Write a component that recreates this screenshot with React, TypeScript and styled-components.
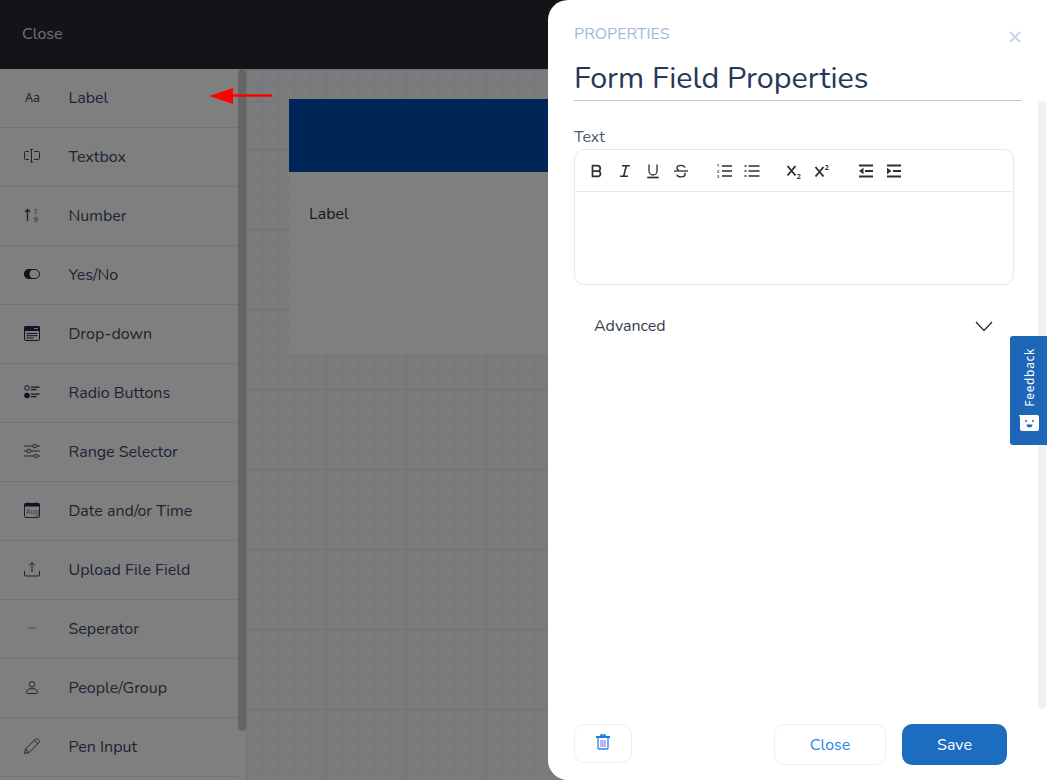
import React from "react";
import styled, { createGlobalStyle } from "styled-components";

const FONT = `"Nunito", "Lato", "Noto Sans", sans-serif`;

const Global = createGlobalStyle`
  html, body { margin: 0; padding: 0; height: 100%; overflow: hidden; background: #fff; }
  * { box-sizing: border-box; }
  body { font-family: ${FONT}; }
`;

const Page = styled.div`
  position: relative; width: 1047px; height: 780px; overflow: hidden;
  display: grid; grid-template-columns: 246px 1fr; grid-template-rows: 69px 1fr;
`;
const TopBar = styled.header`
  grid-column: 1 / 3; background: #26292f; display: flex; align-items: center;
  padding: 0 0 1px 22px; font-size: 16px;
`;
const TopClose = styled.span` color: #fff; opacity: .85; `;
const Sidebar = styled.aside`
  background: #fff; position: relative; overflow: hidden;
`;
const Scroll = styled.div`
  position: absolute; right: 0; top: 0; width: 8px; height: 662px; background: #cbcbcb; border-radius: 4px;
`;
const Row = styled.div`
  height: 59px; display: flex; align-items: center; padding-left: 24px; gap: 28.5px;
  border-bottom: 1px solid #e4e6ee; margin-right: 8px; color: #3a4a68; font-size: 16px;
`;
const IconBox = styled.span`
  width: 16px; height: 16px; display: flex; align-items: center; justify-content: center; flex: none;
  position: relative; top: -1px;
  svg { display: block; overflow: visible; }
`;
const Canvas = styled.main`
  background-color: #f5f7fb;
  background-image:
    linear-gradient(#e0e2ea 1px, transparent 1px),
    linear-gradient(90deg, #e0e2ea 1px, transparent 1px),
    linear-gradient(#e8eaf2 1px, transparent 1px),
    linear-gradient(90deg, #e8eaf2 1px, transparent 1px);
  background-size: 80px 80px, 80px 80px, 16px 16px, 16px 16px;
  padding: 30px 0 0 43px;
`;
const Card = styled.section` background: #fff; width: 400px; height: 255px; `;
const CardHead = styled.div` height: 73px; background: #004cb0; `;
const CardLabel = styled.div` padding: 32px 20px; font-size: 16px; line-height: 20px; color: #2d3340; `;
const Dim = styled.div` position: absolute; inset: 0; background: rgba(0,0,0,.5); `;
const Arrow = styled.svg` position: absolute; left: 208px; top: 85px; `;
const Drawer = styled.aside`
  position: absolute; left: 548px; top: 0; width: 499px; height: 780px; background: #fff;
  border-radius: 20px 0 0 20px; padding: 25px 25px 15px 26px; display: flex; flex-direction: column;
`;
const Eyebrow = styled.div` font-size: 16px; color: #a5b9d6; line-height: 19px; `;
const Title = styled.h1`
  margin: 15px 0 0; font-weight: 400; font-size: 30.5px; line-height: 38px; color: #253858;
  border-bottom: 1px solid #c3c6cf; height: 42px; white-space: nowrap;
`;
const CloseX = styled.svg` position: absolute; left: 461px; top: 31px; `;
const DrawerScroll = styled.div`
  position: absolute; right: 1px; top: 101px; width: 8px; height: 608px; background: #f1f1f1; border-radius: 4px;
`;
const FieldLabel = styled.div` margin-top: 26px; font-size: 16px; line-height: 20px; color: #4a5a73; `;
const Editor = styled.div`
  margin-top: 2px; width: 440px; height: 136px; border: 1px solid #e7e8ec; border-radius: 10px;
`;
const Toolbar = styled.div`
  height: 42px; border-bottom: 1px solid #e7e8ec; display: flex; align-items: center; padding-left: 14px; color: #2b2f36;
`;
const ToolGroup = styled.div<{ $after?: number }>`
  display: flex; gap: 12px; margin-right: ${(p) => p.$after ?? 0}px;
  svg { display: block; overflow: visible; }
`;
const Advanced = styled.div`
  width: 419px; margin-top: 20px; padding-left: 20px; display: flex; justify-content: space-between; align-items: center;
  font-size: 16px; color: #343c49; height: 42px;
`;
const Spacer = styled.div` flex: 1; `;
const Footer = styled.div` display: flex; align-items: flex-start; height: 41px; width: 433px; `;
const TrashBtn = styled.button`
  width: 58px; height: 39px; background: #fff; border: 1px solid #eceef2; border-radius: 10px;
  display: flex; align-items: center; justify-content: center; padding: 0 0 4px;
`;
const GhostBtn = styled.button`
  margin-left: auto; width: 112px; height: 41px; background: #fff; border: 1px solid #eceef2; border-radius: 10px;
  color: #2f86e8; font: 400 16px ${FONT};
`;
const SaveBtn = styled.button`
  margin-left: 16px; width: 105px; height: 41px; background: #1c6cc0; border: 0; border-radius: 10px;
  color: #fff; font: 400 16px ${FONT};
`;
const FeedbackTab = styled.div`
  position: absolute; left: 1010px; top: 336px; width: 37px; height: 109px; background: #1e67b8;
  border-radius: 3px 0 0 3px; display: flex; flex-direction: column; align-items: center; padding: 12px 0 0; gap: 8px; color: #fff;
`;
const FeedbackText = styled.span`
  writing-mode: vertical-rl; transform: rotate(180deg); font: 400 12px "Noto Sans", sans-serif; letter-spacing: .65px; line-height: 16px; margin-left: 3px;
`;

const T = ({ children }: { children: React.ReactNode }) => (
  <svg width="16" height="16" viewBox="0 0 16 16" fill="none" stroke="currentColor">{children}</svg>
);
const Bold = () => <T><path strokeWidth="1.700" d="M3.500 2.500v11M2.800 2.700h5.700a2.700 2.700 0 0 1 0 5.400H3.500M8.500 8.100h.8a2.700 2.700 0 0 1 0 5.300H2.800" /></T>;
const Italic = () => <T><path strokeWidth="1.600" d="M5 2.700h8M3 13.300h8M9.400 2.700 6.600 13.300" /></T>;
const Under = () => <T><path strokeWidth="1.300" d="M4 1.500v6.500a4 4 0 0 0 8 0V1.500" /><path strokeWidth="1.700" d="M2.200 14.500h11.600" /></T>;
const Strike = () => <T><path strokeWidth="1.400" d="M12 4.600C11.500 3 10 2.400 8 2.400S4 3.400 4 5c0 1 .7 1.900 2 2.400M11.600 9.800c.6.600.7 1.300.5 2.100-.4 1.500-2 2-4 2-2.200 0-3.700-.8-4.200-2.200" /><path strokeWidth="1.300" d="M1 8h14" /></T>;
const ListOl = () => <T><path strokeWidth="1.700" d="M6 3h10M6 8h10M6 13h10" /><g stroke="none" fill="currentColor" fontSize="3.800" fontWeight="700" fontFamily="Noto Sans, sans-serif"><text x="1" y="4">1</text><text x="1" y="9.500">2</text><text x="1" y="15">3</text></g></T>;
const ListUl = () => <T><path strokeWidth="1.700" d="M4.500 3H15.500M4.500 8H15.500M4.500 13H15.500M.5 3h2M.5 8h2M.5 13h2" /></T>;
const Sub = () => <T><path strokeWidth="1.900" d="M1.500 3l8 9.500M9.500 3l-8 9.500" /><text x="10.800" y="15.500" stroke="none" fill="currentColor" fontSize="7" fontWeight="700" fontFamily="Noto Sans, sans-serif">2</text></T>;
const Sup = () => <T><path strokeWidth="1.900" d="M1.500 4l8 9.500M9.500 4l-8 9.500" /><text x="10.800" y="6.500" stroke="none" fill="currentColor" fontSize="7" fontWeight="700" fontFamily="Noto Sans, sans-serif">2</text></T>;
const Outdent = () => <T><path strokeWidth="2" d="M1 2.500h14M1 13.500h14M7 8h8" /><path stroke="none" fill="currentColor" d="M1 8l4.500-3.200v6.400z" /></T>;
const Indent = () => <T><path strokeWidth="2" d="M1 2.500h14M1 13.500h14M7 8h8" /><path stroke="none" fill="currentColor" d="M5.500 8 1 4.800v6.400z" /></T>;

const S = { fill: "none", stroke: "currentColor", strokeWidth: 1 } as const;
const icons: Record<string, React.ReactNode> = {
  Label: <svg width="16" height="12" viewBox="0 0 16 12"><text x="1" y="11" fontFamily="Noto Sans, sans-serif" fontSize="12.500" fill="currentColor">Aa</text></svg>,
  Textbox: <svg width="16" height="16" viewBox="0 0 16 16" {...S}><path d="M5 3.500H1.500a1 1 0 0 0-1 1v6a1 1 0 0 0 1 1H5M10 3.500h4.500a1 1 0 0 1 1 1v6a1 1 0 0 1-1 1H10M6 1.500h3M6 14h3M7.500 1.500V14" /></svg>,
  Number: <svg width="16" height="16" viewBox="0 0 16 16"><path d="M3.500 14V2.500M1 5 3.500 2.500 6 5" fill="none" stroke="currentColor" strokeWidth="1.400" /><text x="9.500" y="6.500" fontSize="7.500" fontFamily="Noto Sans" fill="currentColor">1</text><text x="9.500" y="14.500" fontSize="7.500" fontFamily="Noto Sans" fill="currentColor">9</text></svg>,
  "Yes/No": <svg width="16" height="10" viewBox="0 0 16 10"><rect x=".5" y=".5" width="15" height="9" rx="4.500" fill="#fff" stroke="#1e2a45" /><path d="M5 0h5.500a5 5 0 0 0 0 10H5A5 5 0 0 1 5 0z" fill="#1e2a45" /></svg>,
  "Drop-down": <svg width="16" height="15" viewBox="0 0 16 15"><rect x=".5" y=".5" width="15" height="14" rx="1.500" fill="none" stroke="#1e2a45" /><path d="M0 2a2 2 0 0 1 2-2h12a2 2 0 0 1 2 2v3H0z" fill="#1e2a45" /><path d="M10 2.500h4" stroke="#fff" strokeWidth=".9" /><path d="M2.500 7.500h11M2.500 9.700h11M2.500 12h7" stroke="#1e2a45" /></svg>,
  "Radio Buttons": <svg width="16" height="14" viewBox="0 0 16 14"><circle cx="3" cy="3" r="2.300" fill="none" stroke="#1e2a45" /><circle cx="3" cy="10.500" r="2.800" fill="#1e2a45" /><path d="M7 2.200h8.500M7 4.600h5.500M7 9.200h8.500M7 11.600h5.500" stroke="#1e2a45" strokeWidth="1.200" /></svg>,
  "Range Selector": <svg width="16" height="16" viewBox="0 0 16 16" {...S}><path d="M0 3h9M12.500 3H16M0 8h3M6.500 8H16M0 13h10M13.500 13H16" /><circle cx="10.700" cy="3" r="1.800" /><circle cx="4.700" cy="8" r="1.800" /><circle cx="11.700" cy="13" r="1.800" /></svg>,
  "Date and/or Time": <svg width="16" height="16" viewBox="0 0 16 16"><rect x=".5" y="1.500" width="15" height="14" rx="1.500" fill="none" stroke="#4a3560" /><path d="M0 3a2 2 0 0 1 2-2h12a2 2 0 0 1 2 2v1.500H0z" fill="#1e2a45" /><path d="M4 0v2M12 0v2" stroke="#1e2a45" /><text x="2" y="12.300" fontSize="7" fontFamily="Noto Sans" fill="#8a5fa0">Aug</text></svg>,
  "Upload File Field": <svg width="16" height="16" viewBox="0 0 16 16" {...S}><path d="M8 11V1.500M5 4.500l3-3 3 3M.5 10v4a1 1 0 0 0 1 1h13a1 1 0 0 0 1-1v-4" /></svg>,
  Seperator: <svg width="16" height="2" viewBox="0 0 16 2"><path d="M4 1h8" stroke="#b4b7be" strokeWidth="1.600" /></svg>,
  "People/Group": <svg width="12" height="13" viewBox="0 0 12 13" {...S}><circle cx="6" cy="3.300" r="2.700" /><path d="M.5 11.500c0-2.700 1.800-3.800 5.500-3.800s5.500 1.100 5.500 3.800c0 .5-.3.900-.8.900H1.300c-.5 0-.8-.4-.8-.9z" /></svg>,
  "Pen Input": <svg width="16" height="16" viewBox="0 0 16 16" {...S}><path d="M.5 15.500l1-4.500L11.500 1c.6-.6 1.500-.6 2.100 0l1.400 1.400c.6.600.6 1.500 0 2.100L5 14.500l-4.500 1zM10.300 2.200l3.500 3.500M1.500 11l3.500 3.500" /></svg>,
};
const names = Object.keys(icons);

export default function App() {
  return (
    <>
      <Global />
      <Page>
        <TopBar><TopClose>Close</TopClose></TopBar>
        <Sidebar>
          {names.map((n) => (
            <Row key={n}><IconBox>{icons[n]}</IconBox><span>{n}</span></Row>
          ))}
          <Scroll />
        </Sidebar>
        <Canvas>
          <Card>
            <CardHead />
            <CardLabel>Label</CardLabel>
          </Card>
        </Canvas>
        <Dim />
        <Arrow width="64" height="22" viewBox="0 0 64 22">
          <path d="M1 11 25 3v16z" fill="#ff0000" />
          <path d="M24 10.500h40" stroke="#ff0000" strokeWidth="2.400" />
        </Arrow>
        <Drawer>
          <Eyebrow>PROPERTIES</Eyebrow>
          <Title>Form Field Properties</Title>
          <CloseX width="12" height="12" viewBox="0 0 12 12">
            <path d="M1 1l10 10M11 1 1 11" stroke="#ccd6e8" strokeWidth="2.200" />
          </CloseX>
          <DrawerScroll />
          <FieldLabel>Text</FieldLabel>
          <Editor>
            <Toolbar>
              <ToolGroup $after={27}><Bold /><Italic /><Under /><Strike /></ToolGroup>
              <ToolGroup $after={26}><ListOl /><ListUl /></ToolGroup>
              <ToolGroup $after={28}><Sub /><Sup /></ToolGroup>
              <ToolGroup><Outdent /><Indent /></ToolGroup>
            </Toolbar>
          </Editor>
          <Advanced>
            <span>Advanced</span>
            <svg width="18" height="11" viewBox="0 0 18 11"><path d="M1 1l8 8.500L17 1" fill="none" stroke="#2b2f36" strokeWidth="1.300" /></svg>
          </Advanced>
          <Spacer />
          <Footer>
            <TrashBtn>
              <svg width="14" height="16" viewBox="0 0 14 16">
                <path d="M0 3h14" stroke="#1c7bf0" strokeWidth="2" fill="none" />
                <path d="M5 2V1h4v1" stroke="#1c7bf0" strokeWidth="1.600" fill="none" />
                <path d="M2 4v10a1 1 0 0 0 1 1h8a1 1 0 0 0 1-1V4" fill="none" stroke="#2f7ff0" strokeWidth="1.300" />
                <path d="M5 6v7M7 6v7M9 6v7" stroke="#7a72e0" />
              </svg>
            </TrashBtn>
            <GhostBtn>Close</GhostBtn>
            <SaveBtn>Save</SaveBtn>
          </Footer>
        </Drawer>
        <FeedbackTab>
          <FeedbackText>Feedback</FeedbackText>
          <svg width="20" height="16" viewBox="0 0 20 16">
            <path d="M0 0h18a2 2 0 0 1 2 2v12a2 2 0 0 1-2 2H3a2 2 0 0 1-2-2V3z" fill="#fff" />
            <circle cx="7" cy="6" r="1" fill="#1e67b8" /><circle cx="14" cy="6" r="1" fill="#1e67b8" />
            <path d="M7.500 9.500h6c0 2-1.500 3-3 3s-3-1-3-3z" fill="#1e67b8" />
          </svg>
        </FeedbackTab>
      </Page>
    </>
  );
}
